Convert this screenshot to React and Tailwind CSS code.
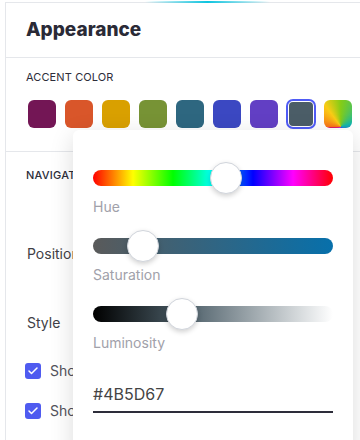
import { Check } from 'lucide-react'

const swatches = [
  'bg-[#731655]',
  'bg-[#d9562a]',
  'bg-[#d9a000]',
  'bg-[#779335]',
  'bg-[#2e6780]',
  'bg-[#3b48c2]',
  'bg-[#623fc4]',
]

const sliders = [
  { label: 'Hue', pos: 133, track: 'bg-[linear-gradient(to_right,#ff0000,#ffff00,#00ff00,#00ffff,#0000ff,#ff00ff,#ff0000)]' },
  { label: 'Saturation', pos: 50, track: 'bg-[linear-gradient(to_right,#5a5a5a,#0770ab)]' },
  { label: 'Luminosity', pos: 89, track: 'bg-[linear-gradient(to_right,#000000,#4b5d67_38%,#ffffff)]' },
]

const Slider = ({ label, pos, track }) => (
  <div>
    <div className="relative h-8 flex items-center">
      <div className={`h-4 w-full rounded-full ${track}`}></div>
      <div
        className="absolute top-0 w-8 h-8 rounded-full bg-white border border-gray-300 shadow-[0_2px_5px_rgba(0,0,0,0.18)]"
        style={{ left: pos - 16 }}
      ></div>
    </div>
    <div className="mt-[3px] text-sm leading-5 text-[#a1a1aa]">{label}</div>
  </div>
)

const CheckRow = ({ text }) => (
  <div className="flex items-center gap-[9px] h-5">
    <span className="w-4 h-4 rounded-[3px] bg-[#4f5bf0] flex items-center justify-center">
      <Check className="w-3 h-3 text-white" strokeWidth={3} />
    </span>
    <span className="text-sm text-[#52525b]">{text}</span>
  </div>
)

export default function App() {
  return (
    <div className="relative w-[360px] h-[440px] overflow-hidden bg-white font-['Inter',sans-serif]">
      <div className="absolute top-[1px] left-[145px] w-[125px] h-[2px] bg-[linear-gradient(to_right,transparent,#0ec4df,transparent)]"></div>

      <div className="ml-[5px] mt-[2px] border-l border-t border-gray-200 h-[460px]">
        {/* Header */}
        <div className="h-[55px] flex items-center px-[20px] border-b border-gray-200">
          <h1 className="text-[19px] font-extrabold text-[#2a2a36]">Appearance</h1>
        </div>

        {/* Accent color */}
        <div className="px-[20px] pt-[11px] pb-[23px] border-b border-gray-200">
          <div className="text-[11px] leading-4 tracking-[0.01em] text-[#2d2d3a]">ACCENT COLOR</div>
          <div className="mt-[15px] flex gap-[9px] ml-[2px]">
            {swatches.map((c) => (
              <div key={c} className={`w-7 h-7 shrink-0 rounded-md ${c}`}></div>
            ))}
            <div className="-m-px w-[30px] h-[30px] shrink-0 rounded-[7px] border-2 border-[#4f5bf5] p-px">
              <div className="w-full h-full rounded-[4px] bg-[#4b5d67]"></div>
            </div>
            <div className="w-7 h-7 shrink-0 rounded-md bg-[conic-gradient(from_270deg_at_60%_95%,#f97316,#facc15_15%,#84cc16_25%,#14b8a6_45%,#2563eb_65%,#c026d3_90%,#e11d48)]"></div>
          </div>
        </div>

        {/* Navigation */}
        <div className="px-[20px] pt-[15px]">
          <div className="text-[11px] leading-4 font-medium tracking-[0.02em] text-[#2d2d3a]">NAVIGATION</div>
          <div className="ml-px mt-[61px] text-sm leading-5 text-[#3f3f46]">Position</div>
          <div className="ml-px mt-[49px] text-sm leading-5 text-[#3f3f46]">Style</div>
          <div className="-ml-px mt-[28px] flex flex-col gap-5">
            <CheckRow text="Show labels" />
            <CheckRow text="Show icons" />
          </div>
        </div>
      </div>

      {/* Color picker popover */}
      <div className="absolute left-[73px] top-[130px] w-[280px] h-[330px] rounded-md bg-white shadow-[0_6px_24px_rgba(0,0,0,0.14)] px-5 pt-8">
        <div className="flex flex-col gap-[13px]">
          {sliders.map((s) => (
            <Slider key={s.label} {...s} />
          ))}
        </div>
        <div className="mt-[29px] text-base leading-6 text-[#444] pb-[5px] border-b-2 border-[#2d2d3a]">#4B5D67</div>
      </div>
    </div>
  )
}
